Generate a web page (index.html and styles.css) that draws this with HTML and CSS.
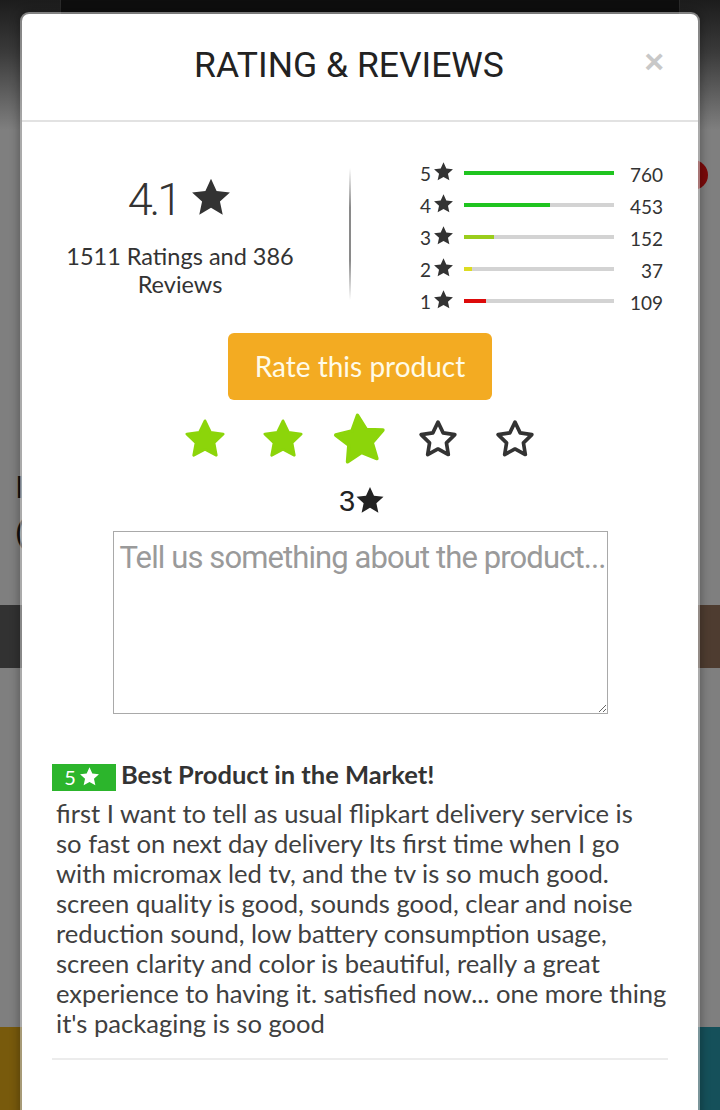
FILE: index.html
```html
<!DOCTYPE html>
<html>
<head>
<meta charset="utf-8">
<link rel="stylesheet" href="styles.css">
</head>
<body>
<div class="backdrop">
  <div class="bd-top"><div class="bd-topbox"></div></div>
  <div class="bd-gray bd-g1"></div>
  <div class="bd-text"><span>I</span><span>(</span></div>
  <div class="bd-gray bd-g2"></div>
  <div class="bd-band"></div>
  <div class="bd-gray bd-g3"></div>
  <div class="bd-bottom"></div>
  <div class="bd-dot"></div>
</div>

<div class="modal">
  <div class="modal-head">
    <h1 class="title">RATING &amp; REVIEWS</h1>
    <span class="close">×</span>
  </div>

  <div class="summary">
    <div class="avg">
      <div class="avg-num"><span class="avg-val">4.1</span><svg class="avg-star" viewBox="0 0 24 24"><path d="M12 1.5l3.2 7.1 7.6.8-5.7 5.1 1.6 7.6L12 18.2l-6.7 3.9 1.6-7.6L1.2 9.4l7.6-.8z"/></svg></div>
      <div class="avg-text">1511 Ratings and 386 Reviews</div>
    </div>
    <div class="divider"></div>
    <div class="dist">
      <div class="row"><span class="lbl">5<svg class="lstar" viewBox="0 0 24 24"><path d="M12 1.5l3.2 7.1 7.6.8-5.7 5.1 1.6 7.6L12 18.2l-6.7 3.9 1.6-7.6L1.2 9.4l7.6-.8z"/></svg></span><span class="track"><span class="fill c5" style="width:150px"></span></span><span class="cnt">760</span></div>
      <div class="row"><span class="lbl">4<svg class="lstar" viewBox="0 0 24 24"><path d="M12 1.5l3.2 7.1 7.6.8-5.7 5.1 1.6 7.6L12 18.2l-6.7 3.9 1.6-7.6L1.2 9.4l7.6-.8z"/></svg></span><span class="track"><span class="fill c4" style="width:86px"></span></span><span class="cnt">453</span></div>
      <div class="row"><span class="lbl">3<svg class="lstar" viewBox="0 0 24 24"><path d="M12 1.5l3.2 7.1 7.6.8-5.7 5.1 1.6 7.6L12 18.2l-6.7 3.9 1.6-7.6L1.2 9.4l7.6-.8z"/></svg></span><span class="track"><span class="fill c3" style="width:30px"></span></span><span class="cnt">152</span></div>
      <div class="row"><span class="lbl">2<svg class="lstar" viewBox="0 0 24 24"><path d="M12 1.5l3.2 7.1 7.6.8-5.7 5.1 1.6 7.6L12 18.2l-6.7 3.9 1.6-7.6L1.2 9.4l7.6-.8z"/></svg></span><span class="track"><span class="fill c2" style="width:8px"></span></span><span class="cnt">37</span></div>
      <div class="row"><span class="lbl">1<svg class="lstar" viewBox="0 0 24 24"><path d="M12 1.5l3.2 7.1 7.6.8-5.7 5.1 1.6 7.6L12 18.2l-6.7 3.9 1.6-7.6L1.2 9.4l7.6-.8z"/></svg></span><span class="track"><span class="fill c1" style="width:22px"></span></span><span class="cnt">109</span></div>
    </div>
  </div>

  <div class="rate">
    <button class="rate-btn">Rate this product</button>
    <div class="stars">
      <span class="cell"><svg class="st on" viewBox="0 0 24 24"><path d="M12 2.5l2.9 6 6.6.9-4.8 4.6 1.2 6.5L12 17.4l-5.9 3.1 1.2-6.5-4.8-4.6 6.6-.9z"/></svg></span>
      <span class="cell"><svg class="st on" viewBox="0 0 24 24"><path d="M12 2.5l2.9 6 6.6.9-4.8 4.6 1.2 6.5L12 17.4l-5.9 3.1 1.2-6.5-4.8-4.6 6.6-.9z"/></svg></span>
      <span class="cell"><svg class="st on big" viewBox="0 0 24 24"><path d="M12 2.5l2.9 6 6.6.9-4.8 4.6 1.2 6.5L12 17.4l-5.9 3.1 1.2-6.5-4.8-4.6 6.6-.9z"/></svg></span>
      <span class="cell"><svg class="st off" viewBox="0 0 24 24"><path d="M12 3.2l2.7 5.6 6.1.9-4.4 4.3 1 6.1L12 17.2l-5.4 2.9 1-6.1-4.4-4.3 6.1-.9z"/></svg></span>
      <span class="cell"><svg class="st off" viewBox="0 0 24 24"><path d="M12 3.2l2.7 5.6 6.1.9-4.4 4.3 1 6.1L12 17.2l-5.4 2.9 1-6.1-4.4-4.3 6.1-.9z"/></svg></span>
    </div>
    <div class="picked">3<svg class="pstar" viewBox="0 0 24 24"><path d="M12 1.5l3.2 7.1 7.6.8-5.7 5.1 1.6 7.6L12 18.2l-6.7 3.9 1.6-7.6L1.2 9.4l7.6-.8z"/></svg></div>
    <textarea class="comment" placeholder="Tell us something about the product..."></textarea>
  </div>

  <div class="review">
    <div class="rev-head"><span class="badge">5<svg class="bstar" viewBox="0 0 24 24"><path d="M12 1.5l3.2 7.1 7.6.8-5.7 5.1 1.6 7.6L12 18.2l-6.7 3.9 1.6-7.6L1.2 9.4l7.6-.8z"/></svg></span><span class="rev-title">Best Product in the Market!</span></div>
    <p class="rev-body">first I want to tell as usual flipkart delivery service is<br>so fast on next day delivery Its first time when I go<br>with micromax led tv, and the tv is so much good.<br>screen quality is good, sounds good, clear and noise<br>reduction sound, low battery consumption usage,<br>screen clarity and color is beautiful, really a great<br>experience to having it. satisfied now... one more thing<br>it's packaging is so good</p>
    <div class="rev-sep"></div>
  </div>
</div>
</body>
</html>
```

FILE: styles.css
```css
* { box-sizing: border-box; }
html, body { margin: 0; padding: 0; }
body {
  width: 720px;
  height: 1110px;
  overflow: hidden;
  background: #7f7f7f;
  font-family: Lato, "Noto Sans", sans-serif;
}

/* dimmed page behind the dialog */
.backdrop {
  position: relative;
  display: flex;
  flex-direction: column;
  height: 1110px;
}
.bd-top {
  height: 130px;
  background: linear-gradient(#1c1c1c, #3a3a3a 40%, #7f7f7f);
  padding-left: 60px;
}
.bd-topbox {
  width: 620px;
  height: 16px;
  background: #0e0e0e;
  border: 1px solid #2a2a2a;
  border-top: 0;
}
.bd-gray { background: #7f7f7f; }
.bd-g1 { height: 335px; }
.bd-text {
  display: flex;
  flex-direction: column;
  height: 100px;
  padding-left: 15px;
  font-family: "Liberation Sans", sans-serif;
  font-size: 32px;
  line-height: 44px;
  color: #111;
}
.bd-g2 { height: 40px; }
.bd-band {
  height: 63px;
  background: linear-gradient(90deg, #323232 0 50%, #4e3c30 50% 100%);
}
.bd-g3 { height: 359px; }
.bd-bottom {
  flex: 1;
  background: linear-gradient(90deg, #785a0c 0 50%, #15505a 50% 100%);
}
.bd-dot {
  position: absolute;
  left: 678px;
  top: 160px;
  width: 30px;
  height: 30px;
  border-radius: 50%;
  background: #7a0a0a;
}

/* dialog */
.modal {
  position: absolute;
  top: 14px;
  left: 22px;
  width: 676px;
  height: 1120px;
  background: #fff;
  border-radius: 7px;
  box-shadow: 0 0 0 2px rgba(255,255,255,0.45), 0 0 10px 3px rgba(0,0,0,0.3);
}
.modal-head {
  position: relative;
  height: 108px;
  border-bottom: 2px solid #e2e2e2;
  display: flex;
  align-items: center;
  justify-content: center;
  padding-right: 22px;
}
.title {
  margin: 0;
  padding-bottom: 4px;
  font-family: Roboto, sans-serif;
  font-weight: 400;
  font-size: 35.5px;
  color: #222;
}
.close {
  position: absolute;
  right: 34px;
  top: 27px;
  font-family: "Liberation Sans", sans-serif;
  font-weight: 700;
  font-size: 34px;
  line-height: 40px;
  color: #c8c8c8;
}

.summary {
  display: flex;
  align-items: flex-start;
  padding: 35px 0 0 29px;
}
.avg {
  width: 258px;
  text-align: center;
  color: #333;
  margin-top: 18px;
}
.avg-num {
  font-family: Roboto, sans-serif;
  font-weight: 300;
  font-size: 45px;
  line-height: 50px;
  display: flex;
  align-items: center;
  justify-content: center;
  gap: 11px;
  margin-bottom: 17px;
}
.avg-val { letter-spacing: -3px; }
.avg-star { width: 42px; height: 42px; fill: #333; margin-top: -6px; }
.avg-text {
  font-size: 23.5px;
  line-height: 28px;
  padding: 0 6px;
}
.divider {
  width: 2px;
  height: 132px;
  margin: 11px 69px 0 40px;
  background: linear-gradient(rgba(120,120,120,0), #8a8a8a 30%, #8a8a8a 70%, rgba(120,120,120,0));
}
.dist { width: 243px; }
.row {
  display: flex;
  align-items: center;
  height: 32px;
  font-size: 19px;
  color: #333;
}
.lbl {
  width: 44px;
  display: flex;
  align-items: center;
  gap: 2px;
}
.lstar { width: 21px; height: 21px; fill: #333; margin-top: -3px; }
.track {
  width: 150px;
  height: 4px;
  background: #d3d3d3;
  display: flex;
}
.fill { height: 4px; }
.c5, .c4 { background: #1fc41f; }
.c3 { background: #9acd1c; }
.c2 { background: #dcdc22; }
.c1 { background: #dd0a0a; }
.cnt { flex: 1; text-align: right; padding-top: 2px; }

.rate {
  display: flex;
  flex-direction: column;
  align-items: center;
  padding-top: 16px;
}
.rate-btn {
  width: 264px;
  height: 67px;
  border: 0;
  border-radius: 6px;
  background: #f3ab22;
  color: #fffbe8;
  font-family: Lato, sans-serif;
  font-size: 28px;
  padding: 0 0 2px;
}
.stars {
  display: flex;
  margin-top: 12px;
  height: 54px;
  align-items: center;
}
.cell {
  width: 77.5px;
  display: flex;
  justify-content: center;
}
.st { width: 46px; height: 46px; }
.st.on { fill: #8cd50a; stroke: #8cd50a; stroke-width: 1.4; stroke-linejoin: round; }
.st.big { width: 60px; height: 60px; transform: rotate(-6deg); }
.st.off { fill: none; stroke: #333; stroke-width: 1.9; stroke-linejoin: round; }
.picked {
  margin-top: 19px;
  height: 32px;
  display: flex;
  align-items: center;
  font-family: "Liberation Sans", sans-serif;
  font-size: 29px;
  color: #222;
  margin-left: 4px;
}
.pstar { width: 30px; height: 30px; fill: #222; margin-top: -2px; }
.comment {
  margin-top: 14px;
  width: 495px;
  height: 183px;
  border: 1px solid #a9a9a9;
  border-radius: 0;
  padding: 7px 0 6px 6px;
  font-family: Roboto, sans-serif;
  font-size: 31px;
  letter-spacing: -0.9px;
  color: #333;
  resize: vertical;
}
.comment::placeholder { color: #9a9a9a; }

.review {
  padding: 49px 30px 0;
}
.rev-head {
  display: flex;
  align-items: center;
  height: 28px;
}
.badge {
  width: 64px;
  height: 27px;
  background: #2cb52c;
  color: #fff;
  font-size: 20px;
  display: flex;
  align-items: center;
  justify-content: center;
  gap: 3px;
  padding-right: 4px;
}
.bstar { width: 21px; height: 21px; fill: #fff; margin-top: -2px; }
.rev-title {
  margin-left: 5px;
  margin-top: -6px;
  font-weight: 700;
  font-size: 25.5px;
  line-height: 28px;
  color: #333;
}
.rev-body {
  margin: 7px 0 0 4px;
  font-size: 25.6px;
  line-height: 30px;
  color: #404040;
  white-space: nowrap;
}
.rev-sep {
  margin-top: 20px;
  height: 2px;
  background: #ececec;
}
```
